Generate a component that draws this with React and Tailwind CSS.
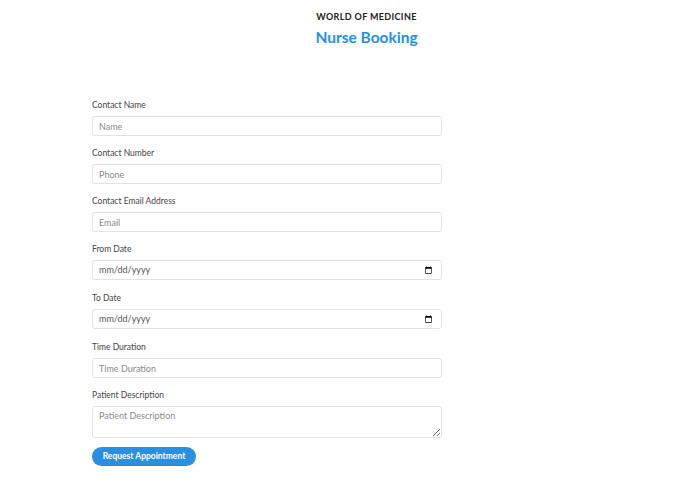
import React from "react";

const fields = [
  { label: "Contact Name", type: "text", placeholder: "Name" },
  { label: "Contact Number", type: "text", placeholder: "Phone" },
  { label: "Contact Email Address", type: "email", placeholder: "Email" },
  { label: "From Date", type: "date" },
  { label: "To Date", type: "date" },
  { label: "Time Duration", type: "text", placeholder: "Time Duration" },
];

const inputCls =
  "block w-full h-[20px] rounded-[3px] border border-[#e3e3e3] bg-white px-[6px] text-[9px] text-[#555] placeholder:text-[#8a8a8a] outline-none";

// squeeze chromium's date field padding so it reads mm/dd/yyyy
const dateCls =
  " [&::-webkit-datetime-edit-text]:p-0 [&::-webkit-datetime-edit-month-field]:p-0 [&::-webkit-datetime-edit-day-field]:p-0 [&::-webkit-datetime-edit-year-field]:p-0";

const App = () => {
  return (
    <div className="min-h-[497px] bg-white font-['Lato','Noto_Sans',sans-serif] text-[#333]">
      <header className="pl-[50px] pt-[11px] text-center">
        <div className="text-[9px] font-bold leading-[12px] tracking-[0.04em] text-[#222]">
          WORLD OF MEDICINE
        </div>
        <h1 className="mt-[4px] text-[15.5px] font-bold leading-[20px] text-[#1f8ff0]">
          Nurse Booking
        </h1>
      </header>

      <form className="ml-[92px] mt-[52px] w-[350px]">
        {fields.map((f) => (
          <div key={f.label} className={f.type === "date" ? "mb-[12px]" : "mb-[11px]"}>
            <label className="mb-[5px] block text-[8.5px] leading-[12px] text-[#444]">
              {f.label}
            </label>
            <input
              type={f.type}
              placeholder={f.placeholder}
              className={inputCls + (f.type === "date" ? dateCls : "")}
            />
          </div>
        ))}
        <div className="mb-[3px]">
          <label className="mb-[5px] block text-[8.5px] leading-[12px] text-[#444]">
            Patient Description
          </label>
          <textarea
            placeholder="Patient Description"
            className="block h-[32px] w-full rounded-[3px] border border-[#e3e3e3] bg-white px-[6px] py-[3px] text-[9px] leading-[12px] text-[#555] placeholder:text-[#8a8a8a] outline-none"
          />
        </div>
        <button
          type="button"
          className="h-[19px] w-[104px] rounded-full bg-[#2a8fe0] text-[8.5px] font-bold text-white"
        >
          Request Appointment
        </button>
      </form>
    </div>
  );
};

export default App;
